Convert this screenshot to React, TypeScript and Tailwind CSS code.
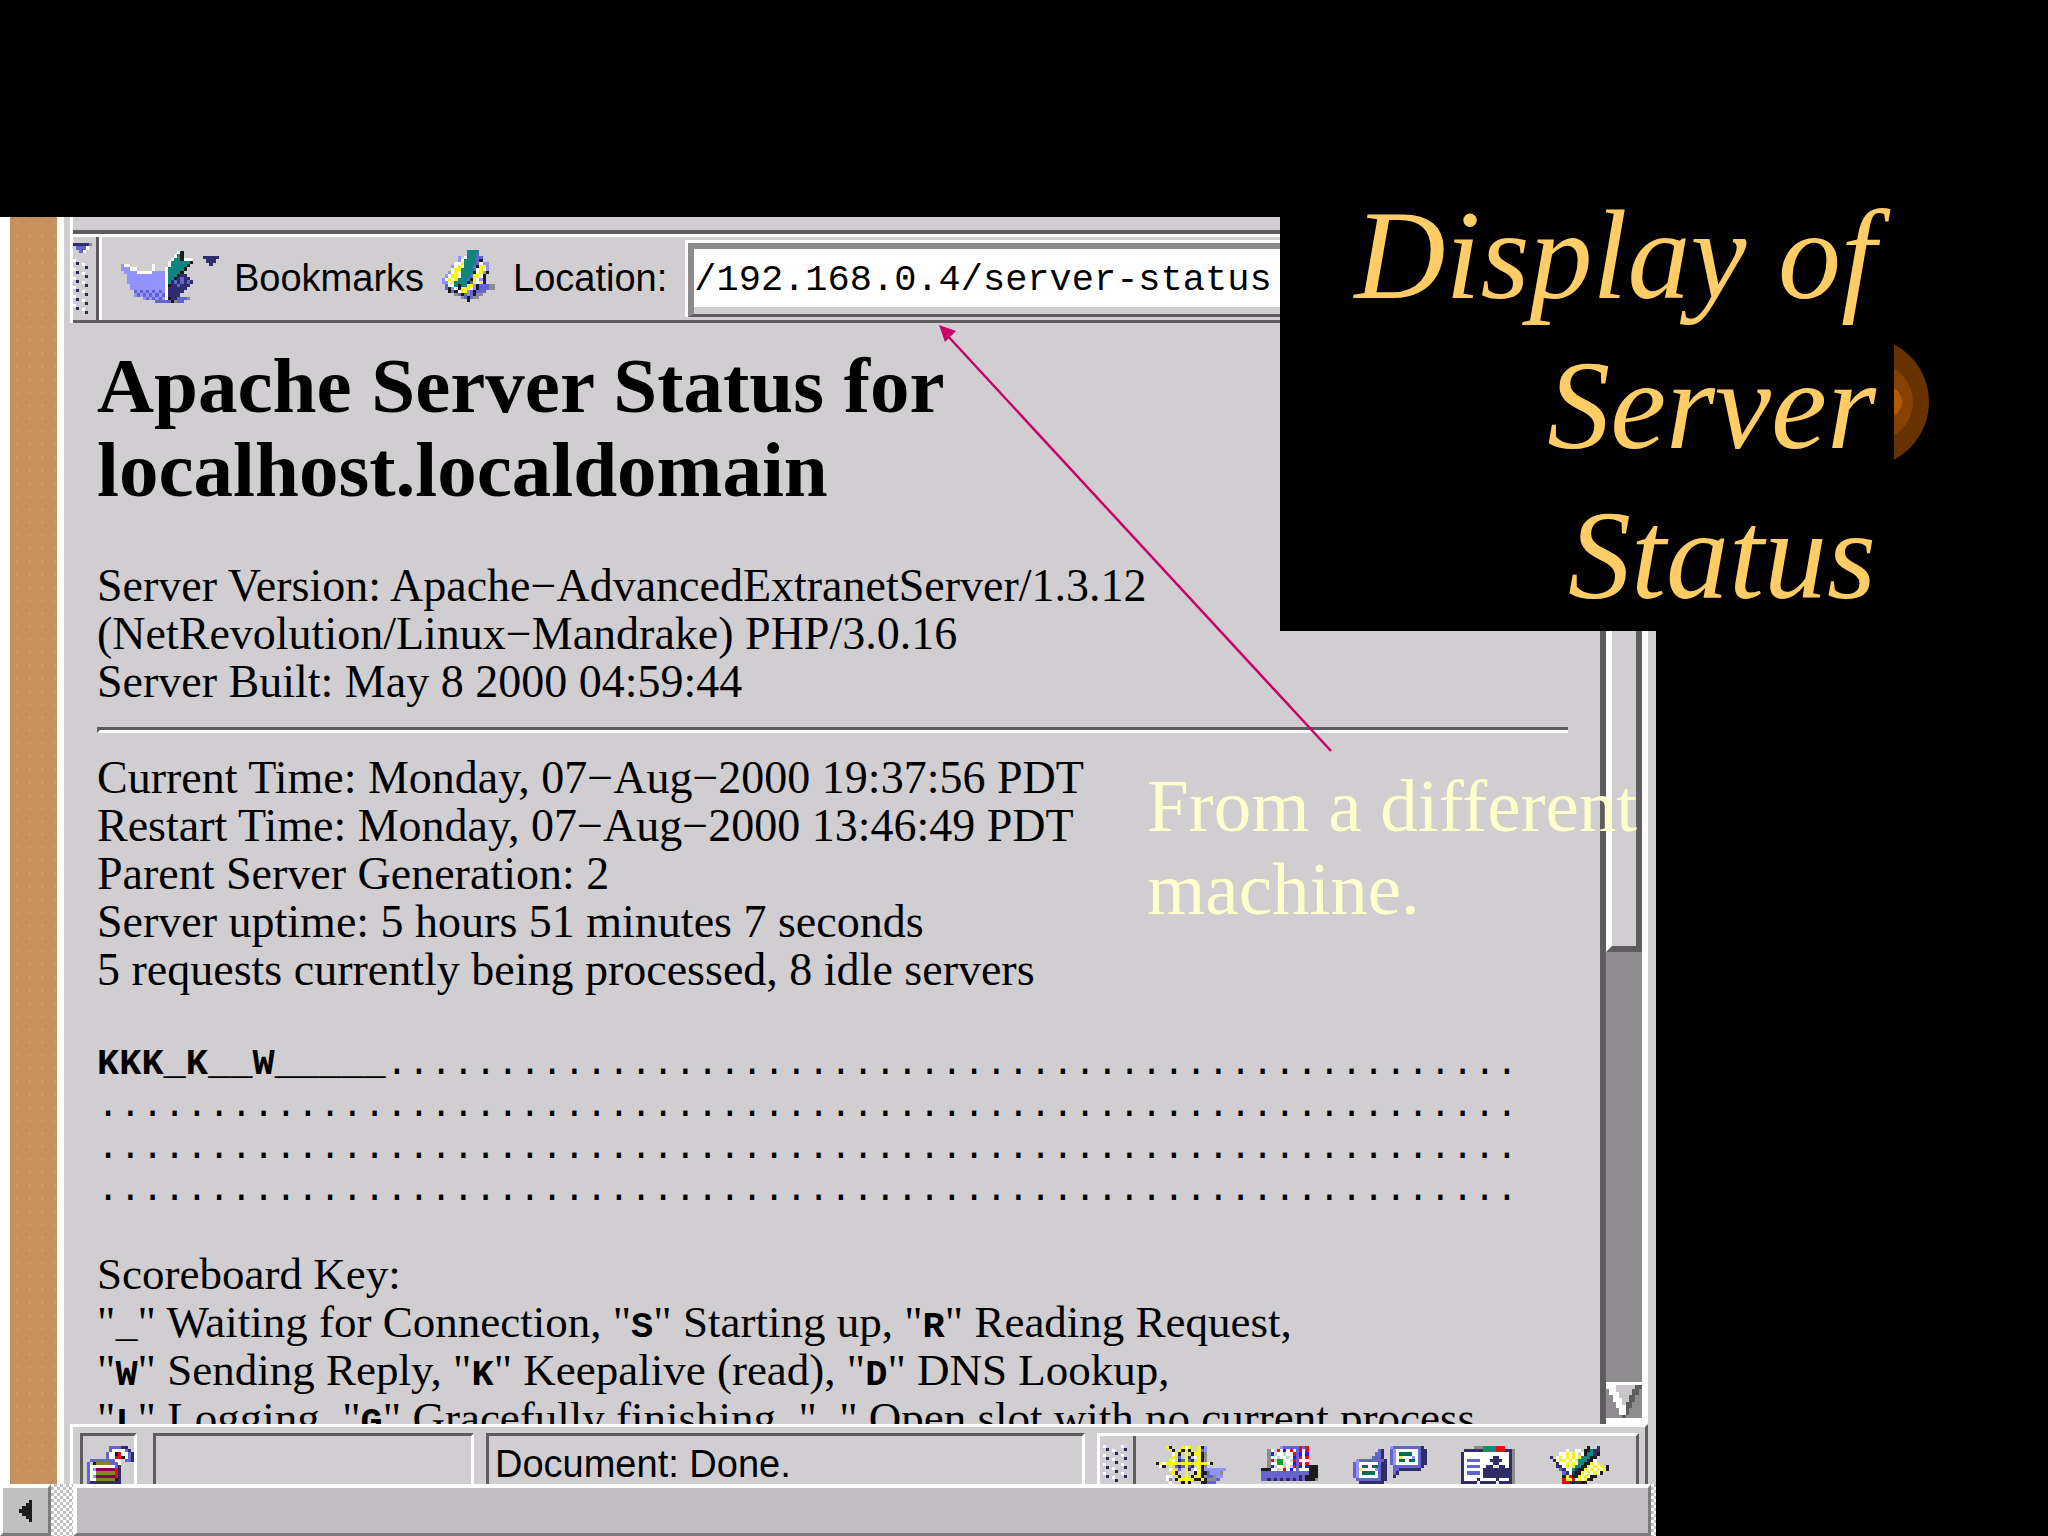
import React from 'react';

const palette: Record<string, string> = {
  W: '#ffffff',
  L: '#9393ff',
  P: '#6464cc',
  D: '#2e2e6e',
  N: '#302c66',
  K: '#1c1c1c',
  T: '#0f8580',
  G: '#8c8c8c',
  C: '#cfcfcf',
  Y: '#f6f613',
  R: '#e01010',
  M: '#850050',
  O: '#85852a',
  B: '#2020ee',
  E: '#006e50',
  V: '#10a030',
};

const shipIcon = [
  '..................WK...',
  '.................WTK...',
  '................WTTKWWW',
  '...............WTTTTTTK',
  'LWW.......W....WTTTTTK.',
  'LLLWW.....W...WTTTTTK..',
  '.LLLLWWWWWLLLLWTTTTK...',
  '..LLLLLLLLLLLLWTTTKDD..',
  '..LLLLLLLLLLLLWTTKDPDD.',
  '..LLLLLLLLLLLLWTDPDPDPD',
  '...LLLLLLLLLLLWKDDPDDD.',
  '...LLLLLLLLLLLWDDDDDD..',
  '....PLPLPLPLPLWDDDDD...',
  '....LPLPLPLPLPWDDDD....',
  '.......LPLPLPLWKDDPPPG.',
  '...........PPPPPKGPP...',
];

const bookmarkIcon = [
  '........TTTT.....',
  '........TTTP.....',
  '.....L.WTTTPP....',
  '.....LWTTTTPK....',
  '....WWYTTTTPWLL..',
  '...LWYWTTTPKYYL..',
  '...WYYTTTTPWYWL..',
  '..LWYWTTTTKWYLK..',
  '.LWYYWTTTPYYWK...',
  'LWYWYTTTPKYWLK...',
  'LLWYTTTTKPYWYK...',
  '.PWWTKTTYYLKPPPGG',
  '.PKLWKYYYWLKPPPGG',
  '..KPKWYYLPKPPP...',
  '....GPKPLPKGG....',
  '......GPKPGG.....',
  '........K........',
];

const lockIcon = [
  '.......PPPPNN..',
  '.......PWWWWPN.',
  '......PWWKRWWPN',
  '......PWWRRKWPN',
  '.PPPPPPPPWW.PPN',
  'P.KOOOOPPPW....',
  'PWWWWWWWWPN....',
  'PWLMMMMMMRN....',
  'PWWOOOOOORN....',
  'PWLMMMMMMRN....',
  'PWWOOOOOOKN....',
  'PNNNNNNNNNN....',
];

const wheelIcon = [
  '...YK...YWY..YKL......',
  '....YK.YKYKY.YPL......',
  '.....WYKCYCKYYKG......',
  '.....YCPCYNCWYKG......',
  '....YWCNPYPNCYKG......',
  'KYWYYYYCYYYCYYYYWK....',
  '.WK.YCPNPYPNCYKG......',
  '....WYCPCYNCWYKLLLLLLL',
  '.....YKCCYCCKYKKPLLLG.',
  '...WWCYKCYCKYYKGPPGLL.',
  '...WG.KYYYYYKKYKGGGP..',
  '....W...KYK...KKPPP...',
];

const mailIcon = [
  '......LPPPPPRPR...',
  '..GWCRWBWRWPRWR...',
  '..GBCWWCWWRPBWB...',
  '..GWWCWWCWBPRWR...',
  '..GRCVVWWCRPWWW...',
  '..GWWVVCWWBPRWR...',
  '..GBCWWCWCRPBWBKKK',
  'KKKWWCWRWBWPWWWKKK',
  'PPPPPPPPPPPPPPPKKK',
  'PPPPPPPPPPPPNPKKKK',
  'PPNPNPNPNPNPNPKKKG',
];

const discussIcon = [
  '............LPPPPPPPPPN.',
  '........PN..PLWWWWWWWPNN',
  '.......PPN..PLWEEEEWWPNN',
  '......PPPN..PLWYWWWLWPNN',
  '.LPPPPPPPPN.PLWEEWEEWPNN',
  'PLWWWWWWPNN.PLWWWWWWWPNN',
  'PLWEEWEEPNN..PPPPPPPPPN.',
  'PLYWWWWLPNN..PPNNNNNNN..',
  'PLWEEEEWPNN..PN.........',
  'PLWWWWWWPNN..N..........',
  '.PPPPPPPPNN.............',
  '..NNNNNNNN..............',
];

const cardIcon = [
  '....GGGVTTTRRR...',
  '.NNNNNNVVTTRRRNNG',
  'NWWWWWWWWWWWWWWNG',
  'NWWWWWWWWWNNWWWNG',
  'NWPPPPWWWNNNNWWNG',
  'NWWWWWWWWWNNWWWNG',
  'NWPPPPWWNNWWNNWNG',
  'NWWWWWWNNNNNNNNNG',
  'NWPPPPWNNNNNNNNNG',
  'NWWWWWWNNNNNNNNNG',
  'NWWWWNWWWWWNWWWNG',
  'NNNNNWNNNNNWNNNNG',
];

const composerIcon = [
  '............K..N....',
  '.....W..WW.KKTNN....',
  '...WWYWYW.WKTTNK....',
  'N.WYWYWYWYTTTKK.....',
  '.NWYYWYWYTTTKKW.....',
  '..NWWYWYWTTKKYWY....',
  '..NNWYWYTTKKYWYWY.K.',
  '...PNWWTNKKYWYWYWYK.',
  '....PNWNKKYWYWYWK...',
  '....KYRKKYWYWKK.....',
  '....RYYRWYWYKK......',
  '....RRNKNNKK........',
];

const downIcon = [
  'WWWWWWWWWWW',
  'WWWCCCCCCDD',
  '.WWCCCCCDD.',
  '.WWWCCCCDD.',
  '..WWCCCDD..',
  '..WWWCCDD..',
  '...WWCDD...',
  '...WWWDD...',
  '....WWD....',
  '....WWD....',
  '.....D.....',
];

const collapseIcon = ['DDDDDG', '.PPPW.', '..PW..'];
const dropIcon = ['DDDDD', '.DDD.', '..D..'];
const leftIcon = ['...K', '..KK', '.KKK', 'KKKK', '.KKK', '..KK', '...K'];

interface PixelIconProps {
  rows: string[];
  className: string;
  colors?: Record<string, string>;
}

const PixelIcon: React.FC<PixelIconProps> = ({ rows, className, colors = palette }) => (
  <svg
    className={className}
    viewBox={`0 0 ${rows[0].length} ${rows.length}`}
    preserveAspectRatio="none"
    shapeRendering="crispEdges"
    aria-hidden="true"
  >
    {rows.map((row, y) =>
      row.split('').map((c, x) =>
        c === '.' ? null : <rect key={`${x}-${y}`} x={x} y={y} width="1" height="1" fill={colors[c]} />
      )
    )}
  </svg>
);

const Grip: React.FC<{ columns: number; dots: number; className: string }> = ({ columns, dots, className }) => (
  <svg className={className} viewBox={`0 0 ${columns * 9 - 2} ${dots * 9 + 4}`} shapeRendering="crispEdges" aria-hidden="true">
    {Array.from({ length: columns * dots }, (_, i) => {
      const col = i % columns;
      const x = col * 9;
      const y = Math.floor(i / columns) * 9 + (col % 2 ? 4 : 0);
      return (
        <g key={i}>
          <rect x={x} y={y} width="3" height="3" fill="#fff" />
          <rect x={x + 3} y={y + 3} width="3" height="3" fill="#2b2858" />
        </g>
      );
    })}
  </svg>
);

const checker =
  'bg-[conic-gradient(#c0c0c0_25%,#fff_0_50%,#c0c0c0_0_75%,#fff_0)] bg-[length:6px_6px]';

const Toolbar: React.FC = () => (
  <div className="ml-[6px] shrink-0 border-l-[3px] border-white">
    <div className="h-[13px]" />
    <div className="h-1 bg-[#5e5c5e]" />
    <div className="h-[3px] bg-white" />
    <div className="flex h-[86px] border-b-[3px] border-[#5e5c5e]">
      <div className="w-[26px] shrink-0 border-r-[3px] border-[#5e5c5e] pt-[6px]">
        <PixelIcon rows={collapseIcon} className="h-[10px] w-[19px]" />
        <Grip columns={2} dots={6} className="mt-[6px] h-[58px] w-4" />
      </div>
      <div className="flex flex-1 items-center border-l-[3px] border-white pl-[19px] text-[38px]">
        <button type="button" className="flex items-center gap-[10px]" aria-label="Page menu">
          <PixelIcon rows={shipIcon} className="mb-[3px] h-[52px] w-[72px]" />
          <PixelIcon rows={dropIcon} className="mb-[36px] h-[10px] w-4" />
        </button>
        <button type="button" className="ml-[15px]">Bookmarks</button>
        <PixelIcon rows={bookmarkIcon} className="mb-[6px] ml-[18px] h-[52px] w-[53px]" />
        <label htmlFor="location" className="ml-[18px]">Location:</label>
        <div className="ml-[18px] mt-[3px] flex-1 self-start border-l-[3px] border-t-[3px] border-white">
          <div className="border-b-[3px] border-l-[6px] border-t-[6px] border-b-[#5e5c5e] border-l-[#8c8a8c] border-t-[#8c8a8c]">
            <input
              id="location"
              readOnly
              defaultValue="/192.168.0.4/server-status"
              className="block h-[65px] w-full border-b-[7px] border-[#d0ced0] bg-white pt-1 font-['Liberation_Mono',monospace] text-[37px] outline-none"
            />
          </div>
        </div>
      </div>
    </div>
  </div>
);

const Key: React.FC<{ children: string }> = ({ children }) => (
  <>"<b className="font-['Liberation_Mono',monospace] text-[37px] leading-none">{children}</b>"</>
);

const StatusPage: React.FC = () => (
  <main className="min-w-0 flex-1 overflow-hidden whitespace-nowrap pl-[33px] pr-8 pt-[21px] font-['Liberation_Serif',serif] text-[46px] leading-[48px]">
    <h1 className="text-[79px] font-bold leading-[84px]">
      Apache Server Status for
      <br />
      localhost.localdomain
    </h1>
    <p className="mt-[50px]">
      Server Version: Apache−AdvancedExtranetServer/1.3.12
      <br />
      (NetRevolution/Linux−Mandrake) PHP/3.0.16
      <br />
      Server Built: May 8 2000 04:59:44
    </p>
    <hr className="my-[21px] h-[6px] border-b-[3px] border-l-[3px] border-t-[3px] border-b-white border-l-[#5e5c5e] border-t-[#5e5c5e]" />
    <p>
      Current Time: Monday, 07−Aug−2000 19:37:56 PDT
      <br />
      Restart Time: Monday, 07−Aug−2000 13:46:49 PDT
      <br />
      Parent Server Generation: 2
      <br />
      Server uptime: 5 hours 51 minutes 7 seconds
      <br />
      5 requests currently being processed, 8 idle servers
    </p>
    <pre className="mt-[49px] font-['Liberation_Mono',monospace] text-[37px] leading-[42px]">
      <b>KKK_K__W_____</b>
      {'.'.repeat(51)}
      {'\n' + Array(3).fill('.'.repeat(64)).join('\n')}
    </pre>
    <p className="mt-[39px] text-[45px]">
      Scoreboard Key:
      <br />
      <Key>_</Key> Waiting for Connection, <Key>S</Key> Starting up, <Key>R</Key> Reading Request,
      <br />
      <Key>W</Key> Sending Reply, <Key>K</Key> Keepalive (read), <Key>D</Key> DNS Lookup,
      <br />
      <Key>L</Key> Logging, <Key>G</Key> Gracefully finishing, <Key>.</Key> Open slot with no current process
    </p>
  </main>
);

const VerticalScroll: React.FC = () => (
  <div className="flex w-14 shrink-0 flex-col border-l-[6px] border-r-[8px] border-l-[#5e5c5e] border-r-[#d0ced0]">
    <div className="flex flex-1 flex-col border-r-[6px] border-white bg-[#8e8c8e]">
      <div className="h-[629px] border-b-[6px] border-l-[6px] border-r-[6px] border-b-[#5e5c5e] border-l-white border-r-[#5e5c5e] bg-[#d0ced0]" />
      <button type="button" className="mt-auto" aria-label="Scroll down">
        <PixelIcon
          rows={downIcon}
          colors={{ W: '#ffffff', C: '#c8c6c8', D: '#5e5c5e' }}
          className="h-[36px] w-full"
        />
      </button>
      <div className="h-[6px] bg-white" />
    </div>
  </div>
);

const StatusBar: React.FC = () => (
  <footer className="ml-[6px] mr-[8px] flex h-[60px] shrink-0 border-l-[3px] border-r-[3px] border-t-[3px] border-l-white border-r-[#5e5c5e] border-t-white pl-[7px] pr-[6px] pt-[6px]">
    <div className="flex w-[57px] items-end border-l-[3px] border-r-[3px] border-t-[3px] border-[#5e5c5e] border-r-white pl-1">
      <PixelIcon rows={lockIcon} className="h-[38px] w-[48px]" />
    </div>
    <div className="ml-4 w-[321px] border-l-[3px] border-r-[3px] border-t-[3px] border-[#5e5c5e] border-r-white" />
    <div className="ml-3 flex flex-1 items-center border-l-[3px] border-r-[3px] border-t-[3px] border-[#5e5c5e] border-r-white pl-[6px] pt-2 text-[38px] leading-none">
      Document: Done.
    </div>
    <div className="ml-3 flex w-[542px] items-end border-l-[3px] border-r-[3px] border-t-[3px] border-white border-r-[#5e5c5e]">
      <div className="self-stretch border-r-[3px] border-[#5e5c5e] pl-[3px] pr-[5px] pt-[9px]">
        <Grip columns={3} dots={4} className="h-10 w-[25px]" />
      </div>
      <div className="flex flex-1 items-end justify-between pl-5 pr-6">
        <PixelIcon rows={wheelIcon} className="h-[38px] w-[70px]" />
        <PixelIcon rows={mailIcon} className="mb-[3px] h-[35px] w-[57px]" />
        <PixelIcon rows={discussIcon} className="h-[38px] w-[74px]" />
        <PixelIcon rows={cardIcon} className="h-[38px] w-[54px]" />
        <PixelIcon rows={composerIcon} className="h-[38px] w-[62px]" />
      </div>
    </div>
  </footer>
);

const HorizontalScroll: React.FC = () => (
  <div className="flex h-[52px] shrink-0 bg-white">
    <button
      type="button"
      aria-label="Scroll left"
      className="flex w-[51px] shrink-0 items-center justify-center border-b-[3px] border-l-[3px] border-r-[3px] border-t-4 border-[#7c7a7c] border-l-white border-t-white bg-[#c0c0c0]"
    >
      <PixelIcon rows={leftIcon} className="h-[22px] w-[13px]" />
    </button>
    <div className={`w-[22px] shrink-0 ${checker}`} />
    <div className="flex-1 border-b-[3px] border-l-[4px] border-r-[3px] border-t-4 border-[#7c7a7c] border-l-white border-t-white bg-[#c0bec0]" />
    <div className={`w-[5px] shrink-0 ${checker}`} />
  </div>
);

const App: React.FC = () => {
  return (
    <div className="relative h-screen overflow-hidden bg-black pt-[217px] font-['Liberation_Sans',sans-serif] text-black">
      <div className="mr-[392px] flex h-full flex-col bg-[#d0ced0]">
        <div className="flex min-h-0 flex-1">
          <div className="w-16 shrink-0 border-l-[10px] border-r-[7px] border-white bg-[#c8915c] bg-[radial-gradient(#d09a64_1px,transparent_2px)] bg-[length:13px_13px]" />
          <div className="flex min-w-0 flex-1 flex-col">
            <Toolbar />
            <div className="flex min-h-0 flex-1">
              <StatusPage />
              <VerticalScroll />
            </div>
            <StatusBar />
          </div>
        </div>
        <HorizontalScroll />
      </div>

      {/* slide title, laid over the browser window */}
      <h2 className="absolute right-0 top-[217px] h-[414px] w-[768px] bg-black pr-[172px] text-right font-['Liberation_Serif',serif] text-[126px] italic leading-[150px] text-[#ffcc66]">
        <span className="-mt-[36px] block">
          Display of
          <br />
          Server
          <br />
          Status
        </span>
      </h2>
      <svg className="absolute right-[119px] top-[344px] h-[116px] w-[35px]" viewBox="0 0 35 116" aria-hidden="true">
        <circle cx="-30" cy="58" r="65" fill="#663300" />
        <circle cx="-20" cy="58" r="39" fill="#854200" />
        <circle cx="-8" cy="58" r="16" fill="#b35900" />
      </svg>

      <svg className="absolute left-[936px] top-[322px] h-[432px] w-[400px]" viewBox="0 0 400 432" aria-hidden="true">
        <path d="M395 429 L10 12" stroke="#cc0066" strokeWidth="2.5" />
        <path d="M3 3 L20 9 L9 20 Z" fill="#cc0066" />
      </svg>
      <p className="absolute left-[1147px] top-[764px] whitespace-nowrap font-['Liberation_Serif',serif] text-[75px] leading-[83px] text-[#ffffcc]">
        From a different
        <br />
        machine.
      </p>
    </div>
  );
};

export default App;
